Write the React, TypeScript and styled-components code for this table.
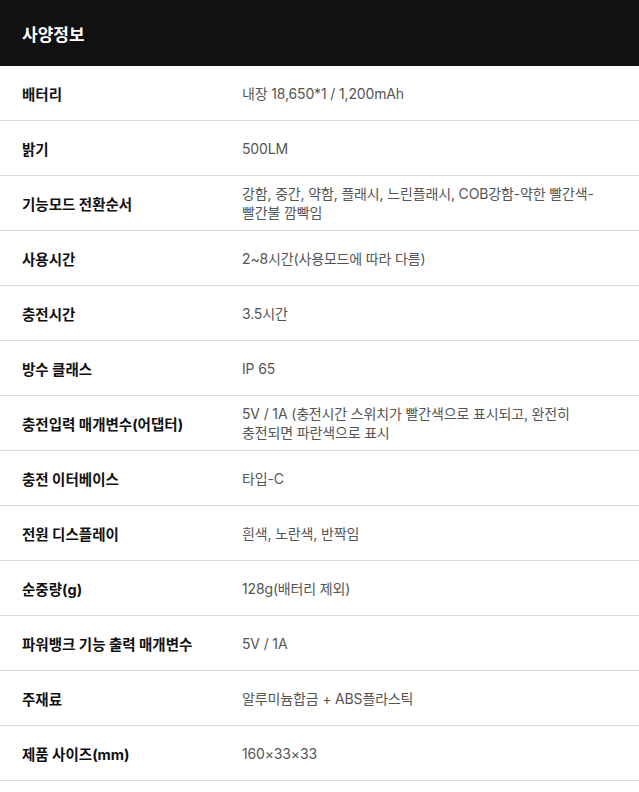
import styled, { createGlobalStyle } from "styled-components";

const GlobalStyle = createGlobalStyle`
  body {
    margin: 0;
    background: #fff;
    font-family: Inter, "Noto Sans CJK KR", sans-serif;
  }
`;

const Wrapper = styled.section`
  width: 639px;
`;

const Header = styled.h2`
  margin: 0;
  height: 66px;
  display: flex;
  align-items: center;
  padding: 0 22px;
  background: #111;
  color: #fff;
  font-size: 17px;
  font-weight: 700;
`;

const Row = styled.div`
  display: grid;
  grid-template-columns: 220px 357px;
  align-items: center;
  min-height: 54px;
  padding-left: 22px;
  border-bottom: 1px solid #dcdcdc;
`;

const Label = styled.div`
  font-size: 14.5px;
  font-weight: 700;
  color: #111;
`;

const Value = styled.div`
  font-size: 14px;
  line-height: 19px;
  color: #555;
  word-break: keep-all;
  letter-spacing: -0.15px;
`;

const specs: [string, string][] = [
  ["배터리", "내장 18,650*1 / 1,200mAh"],
  ["밝기", "500LM"],
  ["기능모드 전환순서", "강함, 중간, 약함, 플래시, 느린플래시, COB강함-약한 빨간색-빨간불 깜빡임"],
  ["사용시간", "2~8시간(사용모드에 따라 다름)"],
  ["충전시간", "3.5시간"],
  ["방수 클래스", "IP 65"],
  ["충전입력 매개변수(어댑터)", "5V / 1A (충전시간 스위치가 빨간색으로 표시되고, 완전히 충전되면 파란색으로 표시"],
  ["충전 이터베이스", "타입-C"],
  ["전원 디스플레이", "흰색, 노란색, 반짝임"],
  ["순중량(g)", "128g(배터리 제외)"],
  ["파워뱅크 기능 출력 매개변수", "5V / 1A"],
  ["주재료", "알루미늄합금 + ABS플라스틱"],
  ["제품 사이즈(mm)", "160×33×33"],
];

export default function App() {
  return (
    <>
      <GlobalStyle />
      <Wrapper>
        <Header>사양정보</Header>
        {specs.map(([label, value]) => (
          <Row key={label}>
            <Label>{label}</Label>
            <Value>{value}</Value>
          </Row>
        ))}
      </Wrapper>
    </>
  );
}
